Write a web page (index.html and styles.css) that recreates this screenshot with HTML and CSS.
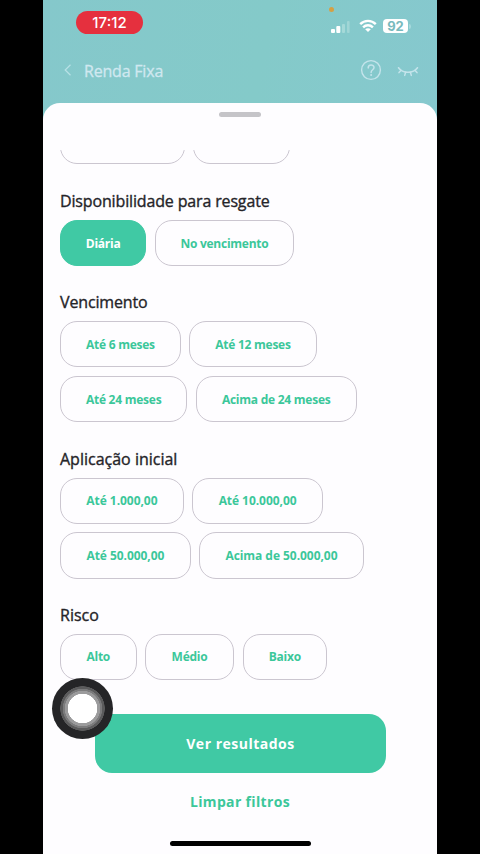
FILE: index.html
```html
<!DOCTYPE html>
<html lang="pt-BR">
<head>
<meta charset="utf-8">
<title>Renda Fixa</title>
<link rel="stylesheet" href="styles.css">
</head>
<body>
<div class="phone">
  <div class="status">
    <span class="time">17:12</span>
    <span class="recording-dot"></span>
    <svg class="signal" width="20" height="14" viewBox="0 0 20 14"><rect x="0" y="9" width="4" height="4" rx="1" fill="#fff"/><rect x="5.3" y="6" width="4" height="7" rx="1" fill="#fff"/><rect x="11" y="4" width="3" height="9" rx="1" fill="#a5d9d8"/><rect x="16" y="1" width="2.6" height="12" rx="1" fill="#a0d6d6"/></svg>
    <svg class="wifi" width="18" height="14" viewBox="0 0 18 14" fill="none" stroke="#fff" stroke-width="2.4"><path d="M1.2 5.2C5.7.7 12.3.7 16.8 5.2"/><path d="M4.1 8.4c2.8-2.8 7-2.8 9.8 0"/><path d="M9 13 6.2 10.2c1.6-1.4 4-1.4 5.6 0Z" fill="#fff" stroke="none"/></svg>
    <span class="battery">92</span><span class="battery-cap"></span>
  </div>
  <header class="nav">
    <svg class="back" width="8" height="12" viewBox="0 0 8 12" fill="none" stroke="#b8e1e6" stroke-width="1.2"><path d="M6.5.8 1.2 6l5.3 5.2"/></svg>
    <h1 class="nav-title">Renda Fixa</h1>
    <svg class="help" width="22" height="22" viewBox="0 0 22 22" fill="none" stroke="#c4e4eb" stroke-width="1.4"><circle cx="11" cy="11" r="9.4"/><path d="M8.2 8.9c0-3.8 5.8-3.8 5.8-.3 0 2.3-2.9 2.1-2.9 4.8" stroke-width="1.5" stroke-linecap="round"/><circle cx="11.1" cy="15.9" r="1" fill="#c4e4eb" stroke="none"/></svg>
    <svg class="eye" width="22" height="12" viewBox="0 0 22 12" fill="none" stroke="#c4e4eb" stroke-width="1.5" stroke-linecap="round"><path d="M1.5 1.7c4.2 6 14.8 6 19 0M4.2 4.2 2 6.6M8.7 6l-1 3.4M13.3 6l1 3.4M17.8 4.2 20 6.6"/></svg>
  </header>
  <main class="sheet">
    <div class="handle"></div>
    <div class="filters">
      <div class="chips clipped"><span class="chip w125"></span><span class="chip w97"></span></div>
      <section class="group"><h2 class="tight">Disponibilidade para resgate</h2>
        <div class="chips"><button class="chip w86 active">Diária</button><button class="chip w140">No vencimento</button></div></section>
      <section class="group"><h2 class="tight">Vencimento</h2>
        <div class="chips"><button class="chip w121">Até 6 meses</button><button class="chip w128">Até 12 meses</button></div>
        <div class="chips"><button class="chip w127">Até 24 meses</button><button class="chip w161">Acima de 24 meses</button></div></section>
      <section class="group amounts"><h2>Aplicação inicial</h2>
        <div class="chips"><button class="chip w124">Até 1.000,00</button><button class="chip w131">Até 10.000,00</button></div>
        <div class="chips"><button class="chip w131">Até 50.000,00</button><button class="chip w165">Acima de 50.000,00</button></div></section>
      <section class="group"><h2>Risco</h2>
        <div class="chips"><button class="chip w76">Alto</button><button class="chip w90">Médio</button><button class="chip w85">Baixo</button></div></section>
    </div>
    <button class="primary">Ver resultados</button>
    <button class="clear">Limpar filtros</button>
    <div class="home"></div>
  </main>
  <div class="touch"></div>
</div>
</body>
</html>
```
FILE: styles.css
```css
* { box-sizing: border-box; }
body { margin: 0; background: #000; overflow: hidden; }
button { font: inherit; border: 0; background: none; padding: 0; }
h1, h2 { margin: 0; }
svg { display: block; flex: none; }
.phone {
  position: relative;
  width: 394px;
  height: 854px;
  margin-left: 43px;
  overflow: hidden;
  display: flex;
  flex-direction: column;
  background: linear-gradient(100deg, #85c8cb 0, #84cac9 55%, #86c8ce 100%) 0 0 / 100% 130px no-repeat;
  font-family: "Open Sans", "Noto Sans", sans-serif;
}
.status { height: 47px; display: flex; align-items: center; padding: 0 26px 0 33px; flex: none; }
.time {
  width: 67px; height: 23px; margin-top: -2px; border-radius: 12px; background: #e5303e; color: #fff;
  font: 500 15px/23px Inter, sans-serif; text-align: center;
}
.recording-dot { position: absolute; left: 286px; top: 7px; width: 5px; height: 5px; border-radius: 50%; background: #d5a044; }
.signal { margin: 6px 8px 0 auto; }
.wifi { margin: 4px 6px 0 0; }
.battery {
  width: 25px; height: 14px; margin-top: 5px; border-radius: 4px; background: #fff; color: #78babd;
  font: 700 13px/14px Inter, sans-serif; text-align: center;
}
.battery-cap { width: 2px; height: 5px; margin: 5px 0 0 1px; border-radius: 0 2px 2px 0; background: #a5d9dc; }
.nav { height: 56px; flex: none; display: flex; align-items: center; padding: 0 18px 10px 21px; }
.nav-title {
  margin: 2px 0 0 12px; color: #d0e8f0; font-size: 16px; line-height: 24px; font-weight: 500;
  letter-spacing: -.2px; -webkit-text-stroke: .3px #d0e8f0;
}
.help { margin-left: auto; }
.eye { margin: 3px 0 0 15px; }
.sheet {
  flex: 1; display: flex; flex-direction: column; border-radius: 17px 17px 0 0; background: #fefdff;
}
.handle { flex: none; width: 42px; height: 5px; margin: 9px auto 0; border-radius: 3px; background: #c5c4c8; }
.filters { height: 597px; flex: none; padding: 33px 17px 0; }
.group { display: flex; flex-direction: column; gap: 8.6px; margin-bottom: 24.2px; }
.group h2 {
  color: #252428; font-size: 16px; font-weight: 500; line-height: 22px; white-space: nowrap;
  padding-top: .8px; margin-bottom: -.7px; -webkit-text-stroke: .35px #252428;
}
.group .tight { letter-spacing: -.15px; }
.chips { display: flex; gap: 8.4px; }
.clipped { height: 14px; overflow: hidden; align-items: flex-end; margin-bottom: 25.5px; }
.chip {
  flex: none; height: 46.2px; border: 1px solid #cbc6d0; border-radius: 17px; color: #3bc79a;
  font-size: 12px; font-weight: 700; letter-spacing: -.25px; text-align: center; white-space: nowrap;
}
.amounts .chip { letter-spacing: -.05px; }
.active { color: #fff; background: #40c9a4; border-color: #40c9a4; }
.w76 { width: 76.5px; }
.w85 { width: 84.5px; }
.w86 { width: 86.3px; }
.w90 { width: 89.3px; }
.w97 { width: 96.5px; }
.w121 { width: 120.8px; }
.w124 { width: 123.8px; }
.w125 { width: 125px; }
.w127 { width: 127.3px; }
.w128 { width: 127.5px; }
.w131 { width: 130.8px; }
.w140 { width: 139.5px; }
.w161 { width: 161px; }
.w165 { width: 164.5px; }
.group .chips + .chips { margin-bottom: .4px; }
.primary, .clear { font-size: 14px; font-weight: 700; }
.primary {
  width: 291px; height: 59px; flex: none; margin-left: 52px; padding-bottom: 1px; border-radius: 17px;
  background: #40c9a4; color: #fff; letter-spacing: .5px;
}
.clear { align-self: center; height: 24px; margin-top: 16px; color: #3bc79a; letter-spacing: .35px; }
.home { width: 141px; height: 5px; margin: 28px auto 0; border-radius: 3px; background: #000; }
.touch {
  position: absolute; left: 9px; top: 678px; width: 61px; height: 61px; border-radius: 50%;
  background: radial-gradient(circle, #fff 0 14.5px, #9b9b9c 15px 17.5px, #7b7b7c 18px 19.5px, #5b5b5c 20px 22px, #252527 22.5px);
}
```
